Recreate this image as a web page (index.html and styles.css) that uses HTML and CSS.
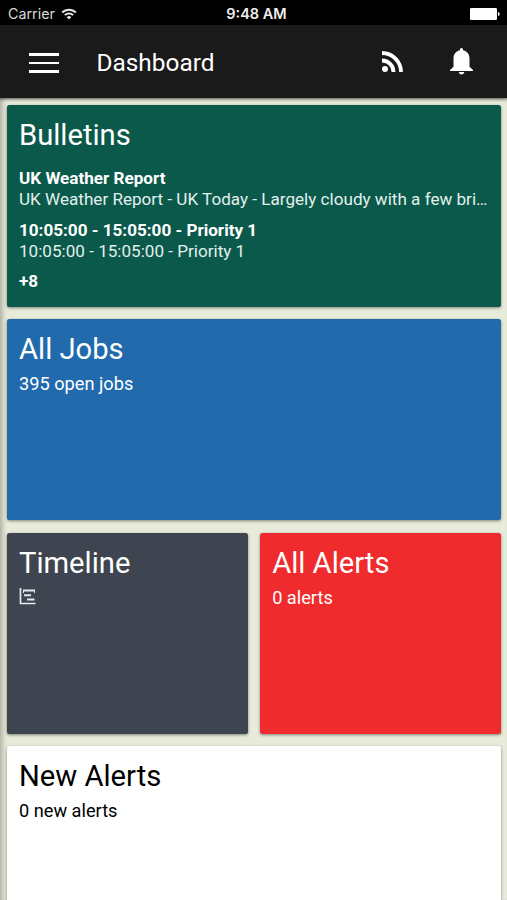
FILE: index.html
```
<!DOCTYPE html>
<html lang="en">
<head>
  <meta charset="UTF-8">
  <meta name="viewport" content="width=device-width, initial-scale=1.0">
  <title>Dashboard</title>
  <link rel="stylesheet" href="styles.css">
</head>
<body>

<div class="status-bar">
  <div class="carrier">
    <span>Carrier</span>
    <svg class="wifi" viewBox="0 0 16 12" fill="none" stroke="#e4e4e4" stroke-width="1.9">
      <path d="M1.2 4.5a9.6 9.6 0 0 1 13.6 0"/>
      <path d="M3.8 7.2a5.9 5.9 0 0 1 8.4 0"/>
      <path d="M8 11.6L5.7 9.2a3.3 3.3 0 0 1 4.6 0z" fill="#e4e4e4" stroke="none"/>
    </svg>
  </div>
  <span class="clock">9:48 AM</span>
  <svg class="battery" viewBox="0 0 30 12" fill="#fff">
    <rect width="27" height="12" rx="1.2"/>
    <path d="M28 4c2.2.4 2.2 3.6 0 4z"/>
  </svg>
</div>

<header class="toolbar">
  <button class="menu-btn" aria-label="Menu">
    <span></span>
    <span></span>
    <span></span>
  </button>
  <h1>Dashboard</h1>
  <button class="icon-btn" aria-label="Feed">
    <svg class="rss" viewBox="0 0 21 21" fill="none" stroke="#fff" stroke-width="3.8">
      <circle cx="3" cy="18" r="3" fill="#fff" stroke="none"/>
      <path d="M0 9.5a11.5 11.5 0 0 1 11.5 11.5"/>
      <path d="M0 2a19 19 0 0 1 19 19"/>
    </svg>
  </button>
  <button class="icon-btn" aria-label="Notifications">
    <svg class="bell" viewBox="0 0 23 27" fill="#fff">
      <path d="M11.5 0c1 0 1.6.8 1.6 2.2 4 .9 6.4 4 6.4 8.3v8.2l3.5 3.3v1H0v-1l3.5-3.3v-8.2c0-4.3 2.4-7.400 6.400-8.300C9.900.8 10.500 0 11.500 0z"/>
      <path d="M8.700 24h5.600c-.3 1.600-1.400 2.500-2.800 2.500s-2.500-.9-2.800-2.500z"/>
    </svg>
  </button>
</header>

<main class="dashboard">
  <section class="card wide bulletins">
    <h2>Bulletins</h2>
    <div class="bulletin">
      <strong>UK Weather Report</strong>
      <p>UK Weather Report - UK Today - Largely cloudy with a few bri…</p>
    </div>
    <div class="bulletin">
      <strong>10:05:00 - 15:05:00 - Priority 1</strong>
      <p>10:05:00 - 15:05:00 - Priority 1</p>
    </div>
    <strong>+8</strong>
  </section>

  <section class="card wide jobs">
    <h2>All Jobs</h2>
    <p>395 open jobs</p>
  </section>

  <section class="card timeline">
    <h2>Timeline</h2>
    <svg class="chart" viewBox="0 0 17 17" fill="none" stroke="#e6e8ee">
      <path d="M1.5 0v15.500h15" stroke-width="1.7"/>
      <path d="M4 2.5h12M5 7.200h7M8 11.500h7.500" stroke-width="2"/>
      <path d="M4.500 2v3M15.500 2v3" stroke-width="1"/>
    </svg>
  </section>

  <section class="card alerts">
    <h2>All Alerts</h2>
    <p>0 alerts</p>
  </section>

  <section class="card wide new-alerts">
    <h2>New Alerts</h2>
    <p>0 new alerts</p>
  </section>
</main>

</body>
</html>
```
FILE: styles.css
```
* {
  box-sizing: border-box;
}

body {
  font-family: Roboto, sans-serif;
  margin: 0;
  height: 100vh;
  overflow: hidden;
  display: flex;
  flex-direction: column;
  background-color: #e8ebda;
  color: #fff;
}

h1, h2, p {
  margin: 0;
  font-weight: 400;
}

button {
  padding: 0;
  border: none;
  background: none;
}

svg {
  display: block;
}

.status-bar {
  flex: none;
  height: 25px;
  padding: 2px 7px 0 8px;
  display: grid;
  grid-template-columns: 1fr auto 1fr;
  align-items: center;
  background-color: #000;
  font-family: Inter, sans-serif;
  font-size: 14.3px;
}

.carrier {
  display: flex;
  align-items: center;
  gap: 6px;
  color: #d8d8d8;
}

.wifi { width: 16px; height: 12px; }
.clock { margin-left: 5px; font-size: 14.5px; font-weight: 600; color: #eee; }
.battery { width: 30px; height: 12px; justify-self: end; }

.toolbar {
  flex: none;
  height: 73px;
  padding: 0 34px 0 29px;
  display: flex;
  align-items: center;
  background-color: #1a1a1a;
  box-shadow: 0 1px 4px rgba(0,0,0,0.4);
}

.toolbar h1 {
  flex: 1;
  margin-left: 37.5px;
  padding-top: 2px;
  font-size: 24.4px;
}

.menu-btn {
  width: 30px;
  padding-top: 3px;
  display: flex;
  flex-direction: column;
  gap: 6px;
}

.menu-btn span {
  height: 2.5px;
  background-color: #fff;
}

.rss { width: 21px; height: 21px; }
.bell { width: 23px; height: 27px; }
.icon-btn + .icon-btn { margin-left: 47px; }

.dashboard {
  flex: 1;
  min-height: 0;
  overflow: hidden;
  padding: 7px 6px 0 7px;
  display: grid;
  grid-template-columns: 1fr 1fr;
  grid-auto-rows: 201.5px;
  gap: 12.3px;
  box-shadow: inset 5px 0 4px -2px rgba(0,0,0,0.22), inset 0 3px 3px -2px rgba(0,0,0,0.35);
}

.card {
  min-width: 0;
  padding: 12px;
  border-radius: 2.5px;
  box-shadow: 0 1px 3px rgba(0,0,0,0.45);
  font-size: 18.2px;
  line-height: 21px;
}

.card h2 {
  margin-bottom: 6px;
  font-size: 29.2px;
  line-height: 36px;
}

.card p {
  white-space: nowrap;
  overflow: hidden;
  text-overflow: ellipsis;
}

.card strong {
  display: block;
  font-weight: 700;
}

.wide { grid-column: span 2; }

.bulletins { background-color: #0b594b; font-size: 17.1px; }
.bulletins h2 { margin-bottom: 15px; }
.bulletins p { color: #e2f0ed; }
.bulletin { margin-bottom: 9.5px; }

.jobs { background-color: #216bad; }
.timeline { background-color: #3f4550; }
.alerts { background-color: #f02b2d; }
.new-alerts { background-color: #fff; color: #000; }

.chart { width: 17px; height: 17px; margin-top: 7px; }
```
